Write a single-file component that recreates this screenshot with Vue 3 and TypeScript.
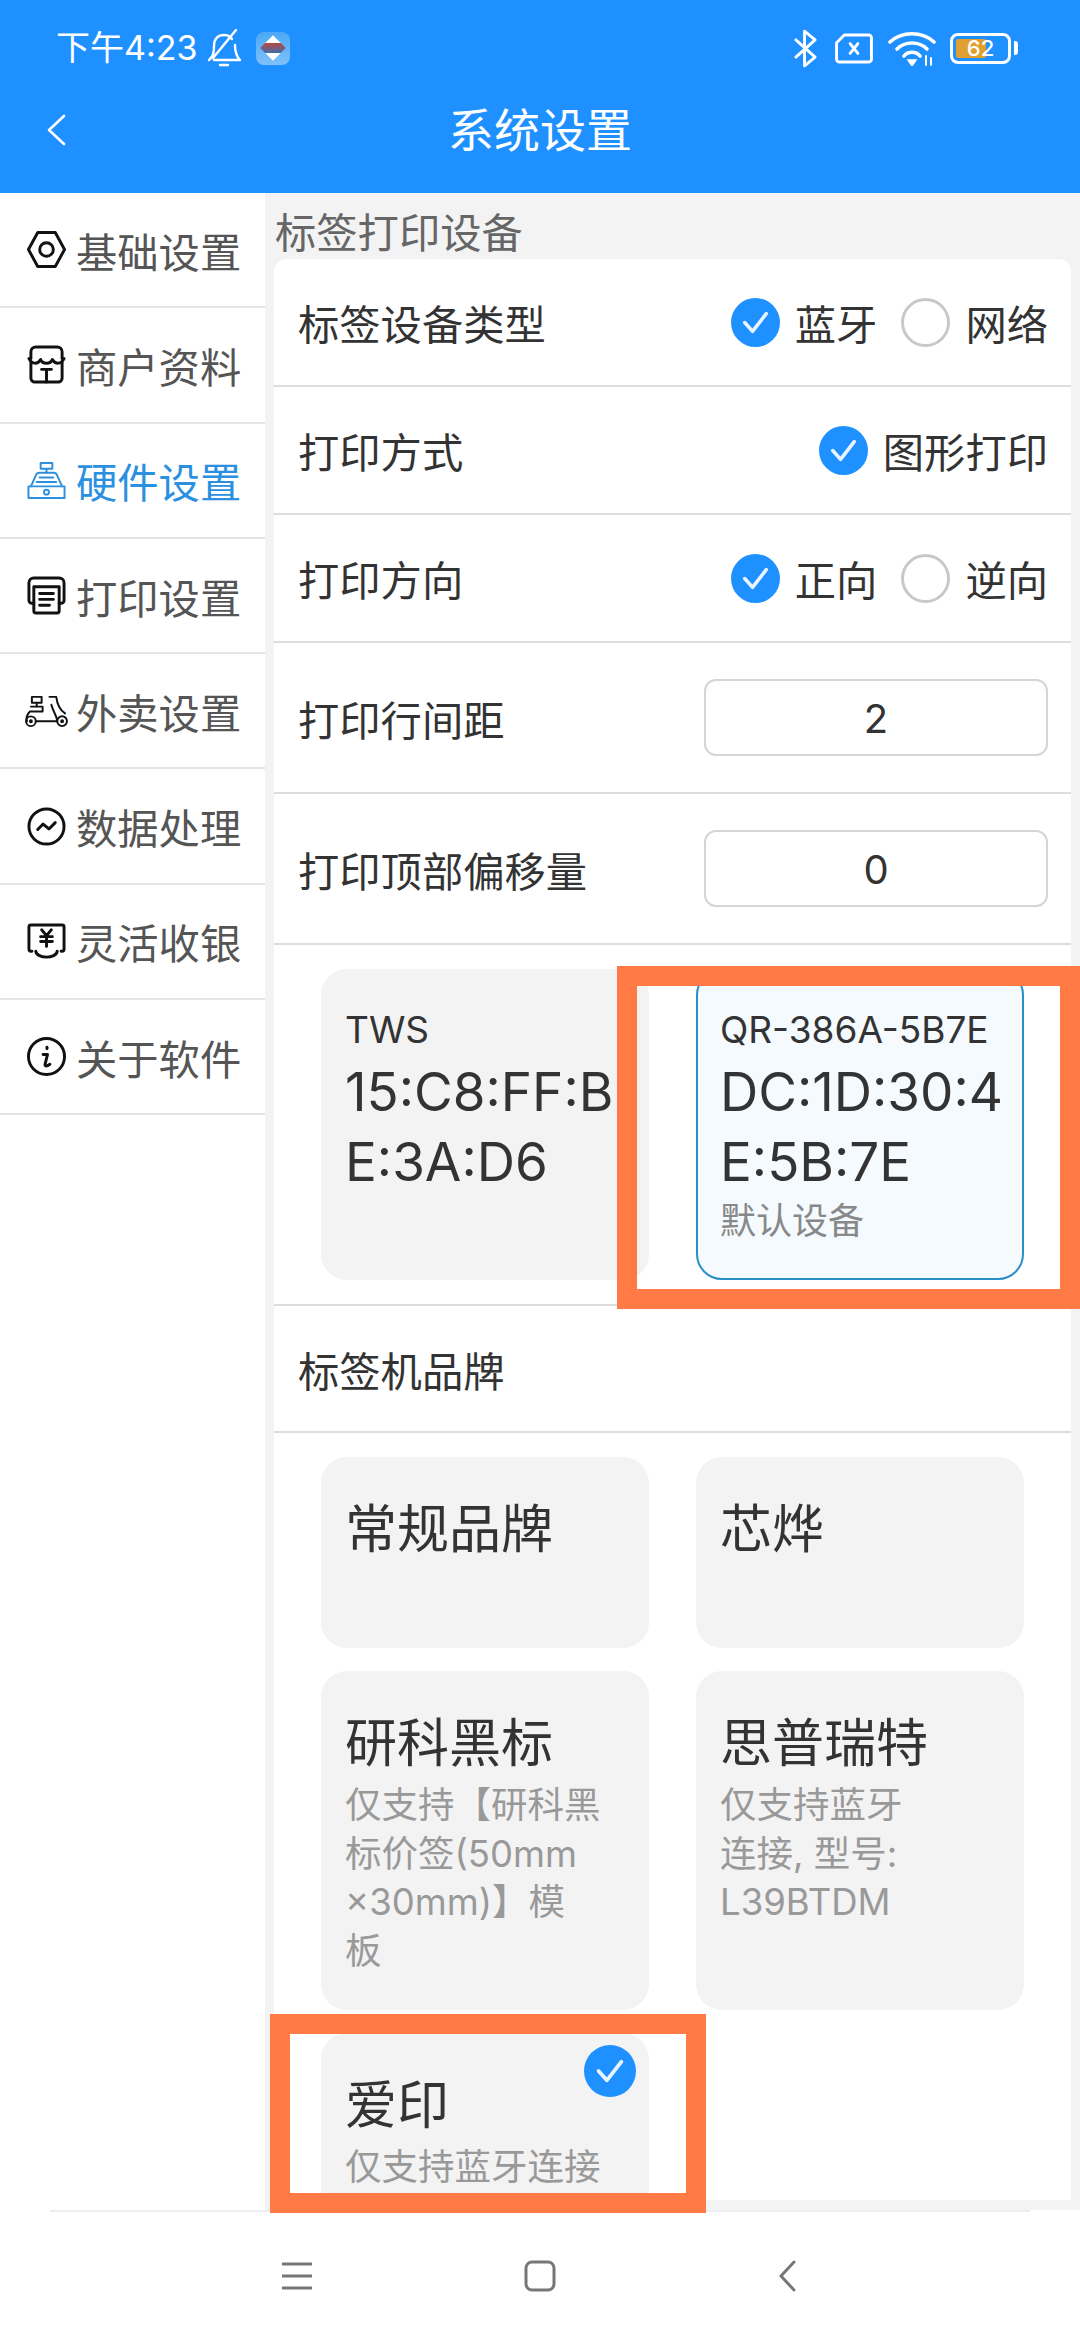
<script setup lang="ts">
type MenuItem = { label: string; paths: string[]; active?: boolean; thin?: boolean }
type DeviceCard = { name: string; mac: string; note?: string; selected?: boolean }
type BrandCard = { title: string; desc?: string; checked?: boolean }

const menu: MenuItem[] = [
  { label: '基础设置', paths: ['M11 2.5H29L38.5 20L29 37.5H11L1.5 20Z', 'M13 20a7 7 0 1 0 14 0a7 7 0 1 0-14 0Z'] },
  {
    label: '商户资料',
    paths: [
      'M4 14V7a5 5 0 0 1 5-5H31a5 5 0 0 1 5 5V14',
      'M2 14C5 20 11 20 14 15C16 20 24 20 26 15C29 20 35 20 38 14',
      'M4 17V34a4 4 0 0 0 4 4H32a4 4 0 0 0 4-4V17',
      'M15 25H25M20 25V38',
    ],
  },
  {
    label: '硬件设置',
    active: true,
    thin: true,
    paths: [
      'M14 2H26V8H14ZM20 8V12',
      'M4 26L9 15a4 4 0 0 1 4-3H27a4 4 0 0 1 4 3L36 26',
      'M1.5 26H38.5V38H1.5Z',
      'M17.5 32a2.5 2.5 0 1 0 5 0a2.5 2.5 0 1 0-5 0Z',
      'M13 17H27',
      'M10 21.5H30',
    ],
  },
  {
    label: '打印设置',
    paths: [
      'M7 28H5a3 3 0 0 1-3-3V7a5 5 0 0 1 5-5H33a5 5 0 0 1 5 5V25a3 3 0 0 1-3 3H33',
      'M7 11H33V36a2 2 0 0 1-2 2H9a2 2 0 0 1-2-2Z',
      'M13 18H27M13 24H27M13 30H23',
    ],
  },
  {
    label: '外卖设置',
    thin: true,
    paths: [
      'M5 6H15V12H5ZM10 12V16',
      'M4 16H16V21H4',
      'M3 21C0 24 -1 28 0 31',
      'M23 6H30C31 14 33 19 39 23',
      'M-1 31a5 5 0 1 0 10 0a5 5 0 1 0-10 0Z',
      'M31 31a5 5 0 1 0 10 0a5 5 0 1 0-10 0Z',
      'M9 31H31C31 26 27 22 25 14',
      'M3 31a1 1 0 1 0 2 0a1 1 0 1 0-2 0ZM35 31a1 1 0 1 0 2 0a1 1 0 1 0-2 0Z',
    ],
  },
  {
    label: '数据处理',
    paths: ['M2 20a18 18 0 1 0 36 0a18 18 0 1 0-36 0Z', 'M11 23L16.5 17.5L22.5 22.5L29 16'],
  },
  {
    label: '灵活收银',
    paths: [
      'M5 30H4a2 2 0 0 1-2-2V5a2 2 0 0 1 2-2H36a2 2 0 0 1 2 2V28a2 2 0 0 1-2 2H35',
      'M9 30C10 38 30 38 31 30',
      'M15 8L20 14L25 8M20 14V25M14 15H26M14 20H26',
    ],
  },
  {
    label: '关于软件',
    paths: [
      'M1.5 20a18.5 18.5 0 1 0 37 0a18.5 18.5 0 1 0-37 0Z',
      'M20.5 10.5V12',
      'M16.5 18H21L18.5 28C18.2 30 20 30.5 23.5 28',
    ],
  },
]

const radioRows = [
  { label: '标签设备类型', options: [{ text: '蓝牙', on: true }, { text: '网络', on: false }] },
  { label: '打印方式', options: [{ text: '图形打印', on: true }] },
  { label: '打印方向', options: [{ text: '正向', on: true }, { text: '逆向', on: false }] },
]

const inputRows = [
  { label: '打印行间距', value: '2' },
  { label: '打印顶部偏移量', value: '0' },
]

const devices: DeviceCard[] = [
  { name: 'TWS', mac: '15:C8:FF:B\nE:3A:D6' },
  { name: 'QR-386A-5B7E', mac: 'DC:1D:30:4\nE:5B:7E', note: '默认设备', selected: true },
]

const brands: BrandCard[] = [
  { title: '常规品牌' },
  { title: '芯烨' },
  { title: '研科黑标', desc: '仅支持【研科黑\n标价签(50mm\n×30mm)】模\n板' },
  { title: '思普瑞特', desc: '仅支持蓝牙\n连接, 型号:\nL39BTDM' },
  { title: '爱印', desc: '仅支持蓝牙连接', checked: true },
]
</script>

<template>
  <div class="screen">
    <header class="header">
      <div class="status">
        <div class="status-left">
          <span class="time">下午4:23</span>
          <svg class="bell" viewBox="0 0 36 38" fill="none" stroke="#fff" stroke-width="2.4" stroke-linecap="round" stroke-linejoin="round">
            <path d="M3 31C8 27 8 22 8 17C8 10 12 6 18 6C21 6 24 7 26 10" />
            <path d="M29 16C29 23 30 27 34 31H8" />
            <path d="M14 36H22" />
            <path d="M7 29L30 1" />
          </svg>
          <div class="app-icon"><span class="app-diamond"></span></div>
        </div>
        <div class="status-right">
          <svg class="st-bt" viewBox="0 0 26 40" fill="none" stroke="#fff" stroke-width="3" stroke-linejoin="round" stroke-linecap="round">
            <path d="M3 11L23 29L12 38V2L23 11L3 29" />
          </svg>
          <svg class="st-sim" viewBox="0 0 40 32" fill="none" stroke="#fff" stroke-width="3" stroke-linejoin="round" stroke-linecap="round">
            <path d="M10 2H35a3 3 0 0 1 3 3V27a3 3 0 0 1-3 3H5a3 3 0 0 1-3-3V10Z" />
            <path d="M16 11L24 21M24 11L16 21" />
          </svg>
          <svg class="st-wifi" viewBox="0 0 48 36" fill="none" stroke="#fff" stroke-width="3.6" stroke-linecap="round">
            <path d="M2 12C14 1 34 1 46 12" />
            <path d="M9 19C17 11 31 11 39 19" />
            <path d="M16 26C20 21 28 21 32 26" />
            <path d="M22 31L24 34L26 31Z" fill="#fff" />
            <path d="M38 26V35M43 28V35" stroke-width="2" />
          </svg>
          <div class="battery">
            <div class="battery-body">
              <div class="battery-fill" :style="{ width: '62%' }"></div>
              <span class="battery-num">62</span>
            </div>
            <div class="battery-tip"></div>
          </div>
        </div>
      </div>
      <div class="titlebar">
        <svg class="back" viewBox="0 0 20 32" fill="none" stroke="#fff" stroke-width="2.6" stroke-linecap="round" stroke-linejoin="round">
          <path d="M18 2L3 16L18 30" />
        </svg>
        <span class="title">系统设置</span>
      </div>
    </header>

    <div class="main">
      <nav class="sidebar">
        <div v-for="item in menu" :key="item.label" class="menu-item" :class="{ active: item.active }">
          <svg class="menu-icon" viewBox="0 0 40 40" fill="none" stroke="currentColor" :stroke-width="item.thin ? 2 : 3" stroke-linecap="round" stroke-linejoin="round">
            <path v-for="d in item.paths" :key="d" :d="d" />
          </svg>
          <span>{{ item.label }}</span>
        </div>
      </nav>

      <section class="panel">
        <div class="panel-title">标签打印设备</div>
        <div class="card">
          <div v-for="row in radioRows" :key="row.label" class="row">
            <span>{{ row.label }}</span>
            <div class="options">
              <div v-for="opt in row.options" :key="opt.text" class="option">
                <svg v-if="opt.on" class="check" viewBox="0 0 50 50">
                  <circle cx="25" cy="25" r="25" fill="#1e90ff" />
                  <path d="M14 25L22 34L36 16" fill="none" stroke="#e8f4ff" stroke-width="3.6" stroke-linecap="round" stroke-linejoin="round" />
                </svg>
                <span v-else class="radio-off"></span>
                <span>{{ opt.text }}</span>
              </div>
            </div>
          </div>

          <div v-for="row in inputRows" :key="row.label" class="row row-input">
            <span>{{ row.label }}</span>
            <div class="input-box">{{ row.value }}</div>
          </div>

          <div class="grid grid-bordered">
            <div v-for="d in devices" :key="d.name" class="tile" :class="{ selected: d.selected }">
              <div class="tile-name">{{ d.name }}</div>
              <div class="tile-mac">{{ d.mac }}</div>
              <div v-if="d.note" class="tile-note">{{ d.note }}</div>
            </div>
          </div>

          <div class="row row-brand"><span>标签机品牌</span></div>

          <div class="grid">
            <div v-for="b in brands" :key="b.title" class="tile brand">
              <svg v-if="b.checked" class="check tile-check" viewBox="0 0 50 50">
                <circle cx="25" cy="25" r="25" fill="#1e90ff" />
                <path d="M14 25L22 34L36 16" fill="none" stroke="#e8f4ff" stroke-width="3.6" stroke-linecap="round" stroke-linejoin="round" />
              </svg>
              <div class="brand-title">{{ b.title }}</div>
              <div v-if="b.desc" class="brand-desc">{{ b.desc }}</div>
            </div>
          </div>
        </div>
      </section>
    </div>

    <footer class="navbar">
      <div class="navbar-line"></div>
      <div class="navbar-icons">
        <svg class="nav-menu" viewBox="0 0 30 28" stroke="#777" stroke-width="3">
          <path d="M0 2H30M0 14H30M0 26H30" />
        </svg>
        <svg class="nav-home" viewBox="0 0 32 32" fill="none" stroke="#777" stroke-width="3">
          <rect x="2" y="2" width="28" height="28" rx="6" />
        </svg>
        <svg class="nav-back" viewBox="0 0 18 32" fill="none" stroke="#777" stroke-width="3" stroke-linecap="round" stroke-linejoin="round">
          <path d="M16 2L3 16L16 30" />
        </svg>
      </div>
    </footer>

    <!-- annotation frames drawn over the screenshot -->
    <div class="mark mark-device"></div>
    <div class="mark mark-brand"></div>
  </div>
</template>

<style scoped>
.screen {
  position: relative;
  width: 1080px;
  height: 2340px;
  display: flex;
  flex-direction: column;
  overflow: hidden;
  background: #fff;
  color: #333;
  font-family: Inter, "Noto Sans CJK SC", sans-serif;
  font-size: 41.3px;
}

.header {
  height: 193px;
  flex-shrink: 0;
  background: #1e90ff;
  color: #fff;
}

.status {
  height: 96px;
  box-sizing: border-box;
  padding: 0 62px 0 56px;
  display: flex;
  justify-content: space-between;
  align-items: center;
}

.status-left,
.status-right {
  display: flex;
  align-items: center;
}

.time {
  font-size: 34px;
  line-height: 40px;
}

.bell {
  width: 36px;
  height: 38px;
  margin-left: 8px;
}

.app-icon {
  width: 34px;
  height: 33px;
  margin-left: 14px;
  border-radius: 8px;
  background: linear-gradient(#4aa8f5, #7fc1fa);
  display: flex;
  align-items: center;
  justify-content: center;
}

.app-diamond {
  width: 18px;
  height: 18px;
  background: linear-gradient(135deg, #fff 30%, #c0453c 30%, #3c6fb0 70%, #fff 70%);
  transform: rotate(45deg);
}

.st-bt {
  width: 25px;
  height: 39px;
}

.st-sim {
  width: 40px;
  height: 31px;
  margin-left: 16px;
}

.st-wifi {
  width: 48px;
  height: 36px;
  margin-left: 14px;
}

.battery {
  display: flex;
  align-items: center;
  margin-left: 14px;
}

.battery-body {
  position: relative;
  width: 61px;
  height: 31px;
  box-sizing: border-box;
  border: 3px solid #fff;
  border-radius: 8px;
  padding: 3px;
}

.battery-fill {
  height: 100%;
  background: #e0a030;
  border-radius: 2px;
}

.battery-num {
  position: absolute;
  left: 0;
  right: 0;
  top: 0;
  text-align: center;
  font-size: 22px;
  line-height: 25px;
  font-weight: 500;
}

.battery-tip {
  width: 4px;
  height: 14px;
  margin-left: 3px;
  background: #fff;
  border-radius: 0 3px 3px 0;
}

.titlebar {
  position: relative;
  height: 68px;
  display: flex;
  align-items: center;
  justify-content: center;
}

.back {
  position: absolute;
  left: 46px;
  top: 18px;
  width: 20px;
  height: 32px;
}

.title {
  font-size: 46px;
  line-height: 68px;
}

.main {
  flex: 1;
  min-height: 0;
  display: flex;
}

.sidebar {
  width: 265px;
  flex-shrink: 0;
  background: #fff;
}

.menu-item {
  height: 115.3px;
  box-sizing: border-box;
  padding-left: 27px;
  display: flex;
  align-items: center;
  gap: 10px;
  border-bottom: 2px solid #e5e5e5;
  color: #555;
}

.menu-item.active {
  color: #2b90e0;
}

.menu-icon {
  width: 39px;
  height: 39px;
  flex-shrink: 0;
  color: #111;
  overflow: visible;
}

.menu-item.active .menu-icon {
  color: #2b90e0;
}

.panel {
  flex: 1;
  min-width: 0;
  display: flex;
  flex-direction: column;
  background: #f3f3f3;
  padding: 0 9px 10px;
}

.panel-title {
  height: 66px;
  line-height: 80px;
  padding-left: 1px;
  color: #666;
  flex-shrink: 0;
}

.card {
  flex: 1;
  min-height: 0;
  overflow: hidden;
  background: #fff;
  border-radius: 12px 12px 0 0;
}

.row {
  height: 128px;
  box-sizing: border-box;
  padding: 0 23px 0 24px;
  display: flex;
  justify-content: space-between;
  align-items: center;
  border-bottom: 2px solid #ddd;
}

.row-input {
  height: 151px;
}

.row-brand {
  height: 127px;
}

.options {
  display: flex;
  gap: 24px;
}

.option {
  display: flex;
  align-items: center;
  gap: 15px;
}

.check {
  width: 49px;
  height: 49px;
  display: block;
}

.radio-off {
  width: 49px;
  height: 49px;
  box-sizing: border-box;
  border: 3px solid #c8c8c8;
  border-radius: 50%;
}

.input-box {
  width: 344px;
  height: 77px;
  box-sizing: border-box;
  border: 2px solid #d5d5d5;
  border-radius: 12px;
  text-align: center;
  line-height: 76px;
  font-size: 40px;
}

.grid {
  display: grid;
  grid-template-columns: 328px 328px;
  column-gap: 47px;
  row-gap: 23px;
  padding: 24px 0 24px 47px;
}

.grid-bordered {
  border-bottom: 2px solid #ddd;
}

.tile {
  position: relative;
  box-sizing: border-box;
  background: #f3f3f3;
  border-radius: 26px;
  padding: 37px 24px 34px;
  min-height: 191px;
}

.tile.selected {
  background: #f5faff;
  border: 2px solid #2a8fc8;
  padding: 35px 22px 33px;
}

.tile-name {
  font-size: 37px;
  line-height: 48px;
}

.tile-mac {
  font-size: 53px;
  line-height: 70px;
  white-space: pre;
  margin-top: 3px;
}

.tile-note {
  font-size: 36px;
  line-height: 48px;
  color: #888;
}

.brand-title {
  font-size: 52px;
  line-height: 70px;
  margin-top: 1px;
}

.brand-desc {
  margin-top: 2px;
  font-size: 36.5px;
  line-height: 48.7px;
  color: #999;
  white-space: pre;
}

.tile-check {
  position: absolute;
  width: 52px;
  height: 52px;
  right: 13px;
  top: 12px;
}

.navbar {
  height: 130px;
  flex-shrink: 0;
  background: #fff;
}

.navbar-line {
  height: 2px;
  margin: 0 50px;
  background: #eee;
}

.navbar-icons {
  height: 128px;
  position: relative;
}

.nav-menu,
.nav-home,
.nav-back {
  position: absolute;
  top: 48px;
}

.nav-menu {
  left: 282px;
  width: 30px;
  height: 28px;
  top: 50px;
}

.nav-home {
  left: 524px;
  width: 32px;
  height: 32px;
}

.nav-back {
  left: 778px;
  width: 18px;
  height: 32px;
}

.mark {
  position: absolute;
  box-sizing: border-box;
  border: 20px solid #ff7a45;
  pointer-events: none;
}

.mark-device {
  left: 617px;
  top: 966px;
  width: 463px;
  height: 343px;
}

.mark-brand {
  left: 270px;
  top: 2014px;
  width: 436px;
  height: 199px;
}
</style>

<style>
html,
body {
  margin: 0;
  background: #fff;
}
</style>
